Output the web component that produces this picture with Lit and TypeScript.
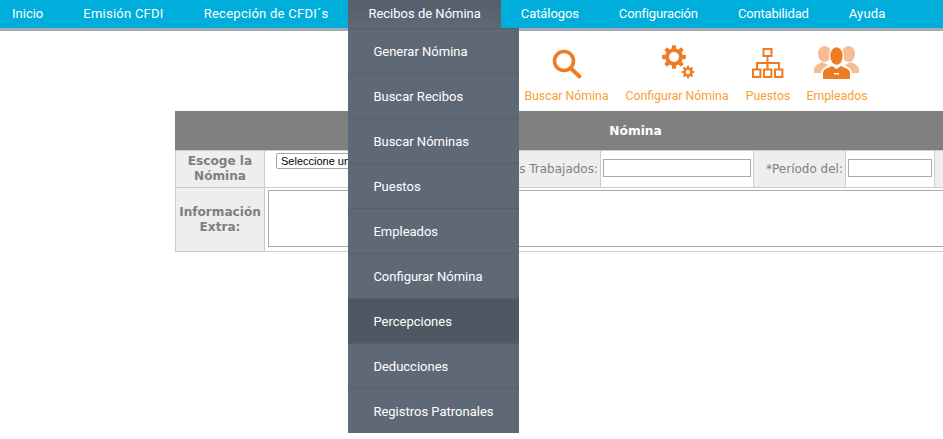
import { LitElement, html, css, svg } from "lit";
import { customElement } from "lit/decorators.js";

const gear = (cx: number, cy: number, ro: number, ri: number, teeth: number) => {
  const pts: string[] = [];
  const step = (Math.PI * 2) / teeth;
  for (let i = 0; i < teeth; i++) {
    const a = i * step;
    const at = (d: number, r: number) =>
      `${(cx + Math.cos(a + d * step) * r).toFixed(2)},${(cy + Math.sin(a + d * step) * r).toFixed(2)}`;
    pts.push(at(-0.2, ro), at(0.2, ro), at(0.32, ri), at(0.68, ri));
  }
  return svg`<polygon points=${pts.join(" ")}></polygon>`;
};

@customElement("app-root")
export class AppRoot extends LitElement {
  static styles = css`
    :host { display: block; width: 943px; height: 439px; overflow: hidden; background: #fff; position: relative; font-family: "Roboto", "Liberation Sans", sans-serif; }
    nav { display: flex; height: 28px; background: #00aedb; border-bottom: 3px solid #a3adb3; }
    .top { padding: 0 20px; line-height: 27px; font-size: 13px; color: #fff; white-space: nowrap; position: relative; }
    .top:first-child { padding-left: 12px; }
    .top.active { background: linear-gradient(#555d69, #5f6976); }
    .drop { position: absolute; left: 0; top: 28px; width: 171px; background: #5f6976; z-index: 5; }
    .drop div { height: 44px; line-height: 45px; padding-left: 25px; border-top: 1px solid #555e6a; font-size: 13px; color: #fff; }
    .drop div.hover { background: #4f5762; }
    .icons { display: flex; height: 80px; padding-left: 525px; box-sizing: border-box; }
    .ic { display: flex; flex-direction: column; align-items: center; font-size: 12.3px; line-height: 15px; color: #f9a031; white-space: nowrap; }
    .ic svg { display: block; margin-top: 14px; height: 38px; margin-bottom: 6px; }
    .ic1 { width: 83px; margin-right: 17px; }
    .ic2 { width: 104px; margin-right: 17px; }
    .ic3 { width: 44px; margin-right: 16px; }
    .ic4 { width: 62px; }
    .wrap { margin-left: 175px; width: 768px; overflow: hidden; }
    table { border-collapse: collapse; table-layout: fixed; width: 920px; font-family: "DejaVu Sans", Verdana, sans-serif; font-size: 12px; color: #808080; }
    th { background: #808080; color: #fff; font-size: 12.2px; height: 38px; padding: 0; text-align: center; border: 1px solid #808080; border-bottom: 1px solid #ccc; }
    td { border: 1px solid #ccc; padding: 0; }
    td.l { background: #eee; text-align: right; padding-right: 2px; box-sizing: border-box; white-space: nowrap; }
    td.b { background: #eee; text-align: center; font-weight: bold; font-size: 12.1px; line-height: 15px; color: #7f7f7f; }
    td.v { vertical-align: top; }
    .r1 { height: 37px; }
    .r2 { height: 63px; }
    select { display: block; margin: 2px 0 0 11px; width: 200px; height: 16px; font: 11px "Liberation Sans", Arial, sans-serif; color: #000; background: #fff; border: 1px solid #a6a6a6; border-radius: 2px; padding: 0; }
    input { display: block; box-sizing: border-box; height: 18px; margin: -2px auto 0; border: 1px solid #aaa; background: #fff; padding: 0; }
    td.i { vertical-align: middle; }
    .in1 { width: 148px; }
    .in2 { width: 84px; }
    .ta { display: block; box-sizing: border-box; margin: 2px 0 4px 3px; width: 800px; height: 57px; border: 1px solid #aaa; background: #fff; }
  `;

  render() {
    const tops: [string, number][] = [["Inicio", 0], ["Emisión CFDI", 0.25], ["Recepción de CFDI´s", 0.27], ["Recibos de Nómina", 0], ["Catálogos", -0.1], ["Configuración", -0.15], ["Contabilidad", -0.17], ["Ayuda", 0.2]];
    const subs = ["Generar Nómina", "Buscar Recibos", "Buscar Nóminas", "Puestos", "Empleados", "Configurar Nómina", "Percepciones", "Deducciones", "Registros Patronales"];
    return html`
      <nav>
        ${tops.map(([t, ls], i) => html`<div class="top ${i === 3 ? "active" : ""}"><span style="letter-spacing:${ls}px">${t}</span>
          ${i === 3 ? html`<div class="drop">${subs.map((s) => html`<div class=${s === "Percepciones" ? "hover" : ""}>${s}</div>`)}</div>` : ""}
        </div>`)}
      </nav>
      <div class="icons">
        <div class="ic ic1">
          <svg width="32" height="38" viewBox="0 0 32 38"><circle cx="13" cy="16" r="9.5" fill="none" stroke="#ef7b22" stroke-width="3.6"></circle><path d="M20 23.5L28.5 31.5" stroke="#ef7b22" stroke-width="4" stroke-linecap="round"></path></svg>
          Buscar Nómina
        </div>
        <div class="ic ic2">
          <svg width="34" height="38" viewBox="0 0 34 38" fill="#ef7b22">
            ${gear(14, 12, 12, 8.8, 8)}<circle cx="14" cy="12" r="5" fill="#fff"></circle>
            ${gear(28, 27, 6.4, 4.6, 8)}<circle cx="28" cy="27" r="2.2" fill="#fff"></circle>
          </svg>
          Configurar Nómina
        </div>
        <div class="ic ic3">
          <svg width="32" height="38" viewBox="0 0 32 38" fill="none" stroke="#ef7b22" stroke-width="2">
            <rect x="11.5" y="4" width="8" height="7"></rect>
            <path d="M15.5 11V18M5 24V18H27V24M15.5 18V24"></path>
            <rect x="1" y="24.5" width="7.4" height="7.5"></rect><rect x="12" y="24.5" width="7.4" height="7.5"></rect><rect x="23" y="24.5" width="7.4" height="7.5"></rect>
          </svg>
          Puestos
        </div>
        <div class="ic ic4">
          <svg width="46" height="38" viewBox="0 0 46 38">
            <g fill="#f6bd92">
              <ellipse cx="10.5" cy="9" rx="6.5" ry="8"></ellipse><ellipse cx="34.5" cy="9" rx="6.5" ry="8"></ellipse>
              <path d="M0 28V25C0 21 4 19 8 17L14 20L10 28Z"></path>
              <path d="M45 28V25C45 21 41 19 37 17L31 20L35 28Z"></path>
            </g>
            <ellipse cx="22.5" cy="11" rx="6.6" ry="9.2" fill="#fff" stroke="#fff" stroke-width="2"></ellipse>
            <path d="M8 34V28C8 24 13 22 18 20L22.5 23L27 20C32 22 37 24 37 28V34Z" fill="#fff" stroke="#fff" stroke-width="2"></path>
            <ellipse cx="22.5" cy="11" rx="6.2" ry="8.8" fill="#ef7b22"></ellipse>
            <path d="M9 34V28C9 24 14 23 18 21L22.5 24L27 21C31 23 36 24 36 28V34Z" fill="#ef7b22"></path>
            <rect x="20" y="28" width="5" height="1.5" fill="#fff"></rect>
          </svg>
          Empleados
        </div>
      </div>
      <div class="wrap">
        <table>
          <colgroup><col style="width:89px" /><col style="width:165px" /><col style="width:171px" /><col style="width:153px" /><col style="width:92px" /><col style="width:89px" /><col style="width:161px" /></colgroup>
          <tr><th colspan="7">Nómina</th></tr>
          <tr class="r1">
            <td class="b">Escoge la Nómina</td>
            <td class="v"><select><option>Seleccione una nómina</option></select></td>
            <td class="l">*Días Trabajados:</td>
            <td class="i"><input class="in1" /></td>
            <td class="l">*Período del:</td>
            <td class="i"><input class="in2" /></td>
            <td class="l"></td>
          </tr>
          <tr class="r2">
            <td class="b">Información Extra:</td>
            <td colspan="6"><div class="ta"></div></td>
          </tr>
        </table>
      </div>
    `;
  }
}
